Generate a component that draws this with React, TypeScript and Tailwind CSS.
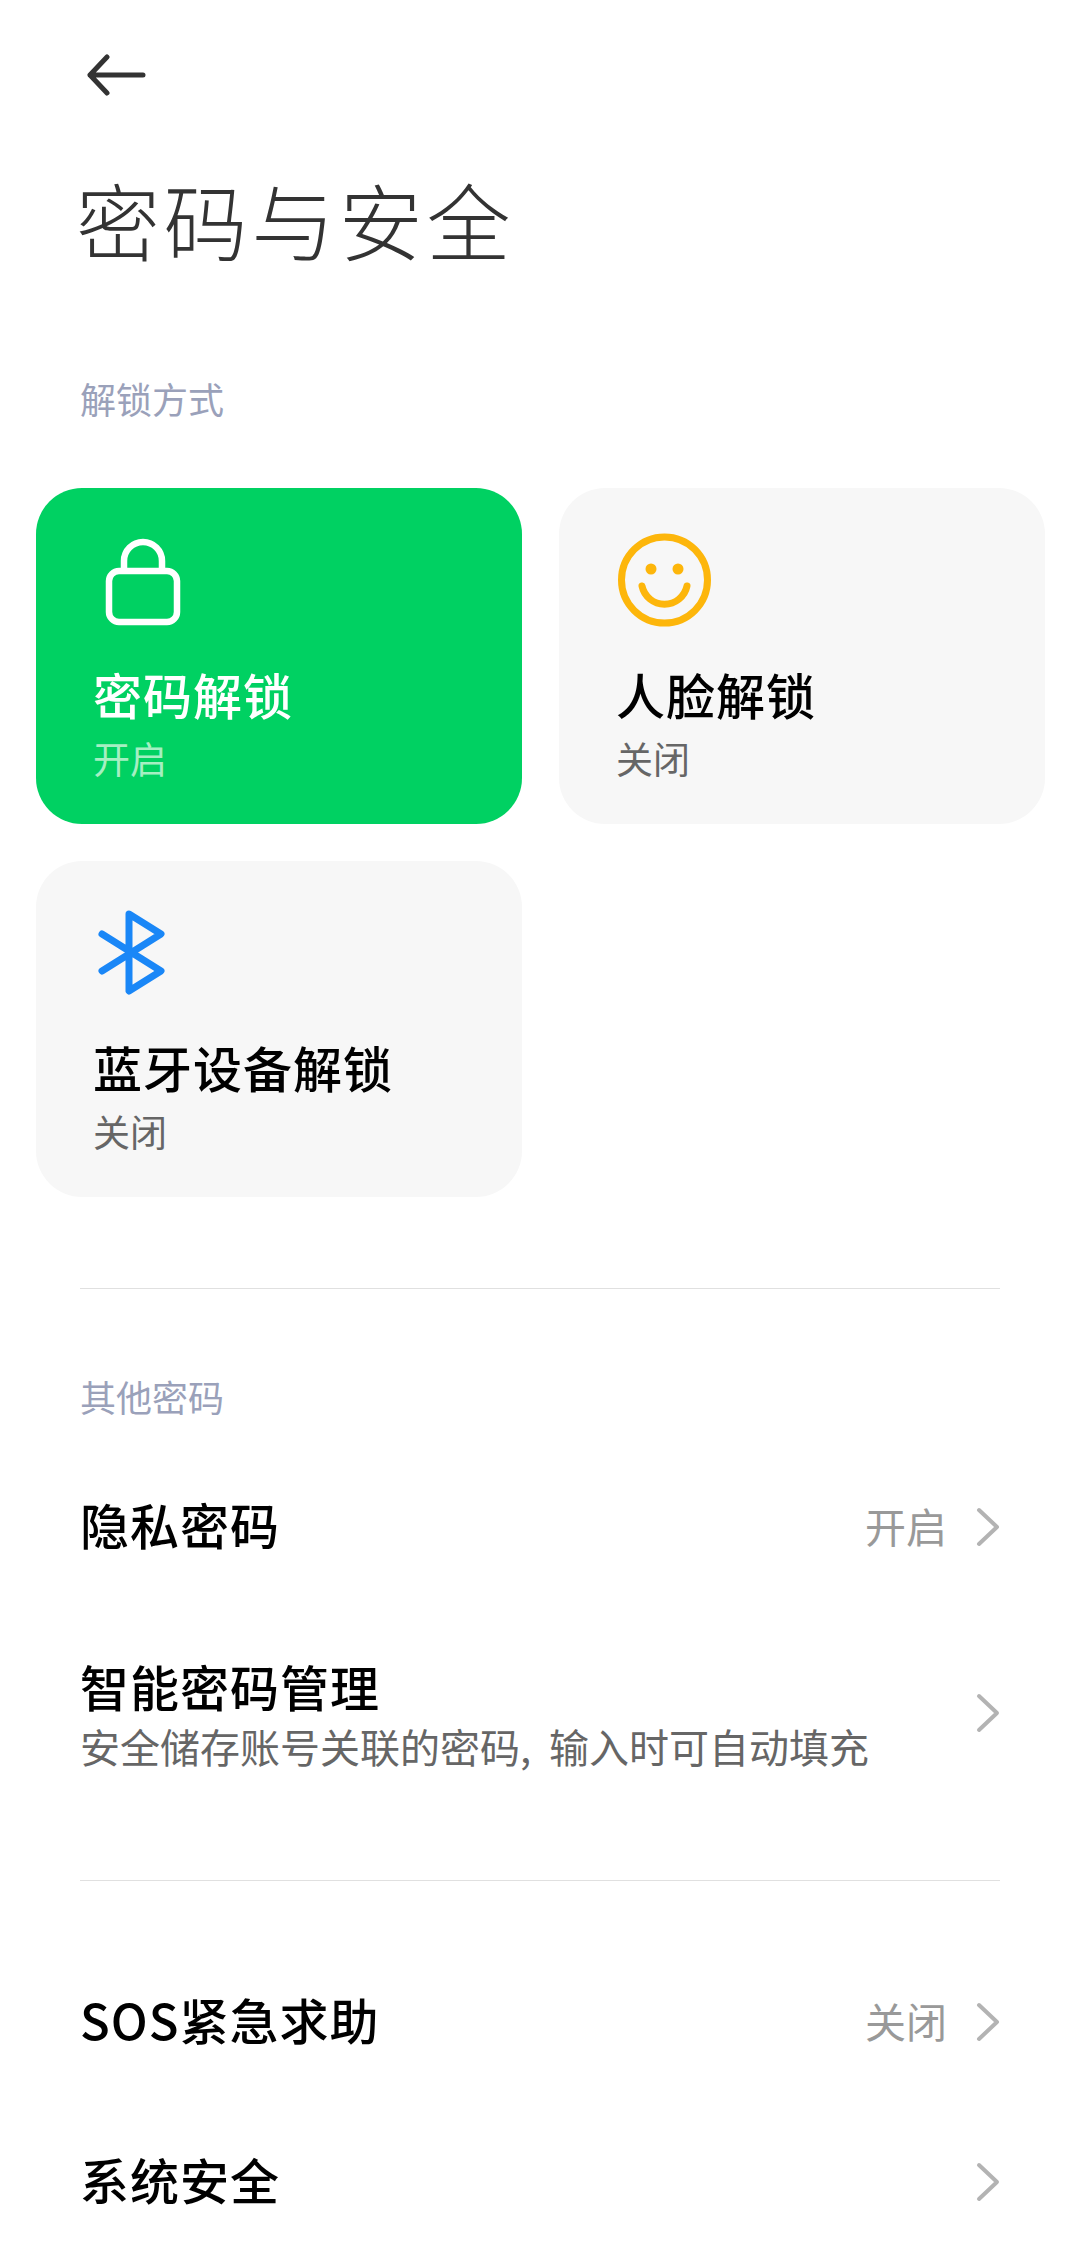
const Lock = () => (
  <svg width="96" height="98" viewBox="0 0 96 98" fill="none" stroke="#fff" strokeWidth="6.5" className="ml-[1px]">
    <rect x="15" y="38" width="68" height="51" rx="10" />
    <path d="M30 38V28a19 19 0 0 1 38 0V38" />
  </svg>
);

const Smile = () => (
  <svg width="96" height="98" viewBox="0 0 96 98" fill="none" stroke="#fdb60b" strokeWidth="7" strokeLinecap="round">
    <circle cx="48.5" cy="47" r="43" />
    <circle cx="35" cy="36" r="5.5" fill="#fdb60b" stroke="none" />
    <circle cx="62" cy="36" r="5.5" fill="#fdb60b" stroke="none" />
    <path d="M26 53A23 23 0 0 0 71 53" />
  </svg>
);

const Bluetooth = () => (
  <svg width="96" height="98" viewBox="0 0 96 98" fill="none" stroke="#1a87f7" strokeWidth="7" strokeLinecap="round" strokeLinejoin="round" className="ml-[1px]">
    <path d="M8 28L67 65L35 85V8L67 28L8 65" />
  </svg>
);

const Chevron = () => (
  <svg width="24" height="40" viewBox="0 0 24 40" fill="none" stroke="#b3b3b3" strokeWidth="4" strokeLinecap="round" strokeLinejoin="round" className="shrink-0">
    <path d="M3 3L21 20L3 37" />
  </svg>
);

const Card = ({ icon, title, sub, active }: { icon: React.ReactNode; title: string; sub: string; active?: boolean }) => (
  <div className={`flex h-[336px] flex-col rounded-[46px] pl-[57px] pt-[45px] ${active ? "bg-[#00d162]" : "bg-[#f7f7f7]"}`}>
    <div className="h-[98px]">{icon}</div>
    <div className={`mt-[33px] text-[49px] leading-[60px] font-medium tracking-[1px] ${active ? "text-white" : "text-black"}`}>{title}</div>
    <div className={`mt-[9px] text-[37px] leading-[50px] ${active ? "text-[#a5efc2]" : "text-[#666666]"}`}>{sub}</div>
  </div>
);

const Row = ({ title, value }: { title: string; value?: string }) => (
  <div className="flex h-[160px] items-center pl-[80px] pr-[80px]">
    <div className="flex-1 pb-[6px] text-[49px] font-medium tracking-[1px] text-black">{title}</div>
    {value && <div className="mr-[29px] pb-[3px] text-[41px] text-[#999999]">{value}</div>}
    <Chevron />
  </div>
);

export default function App() {
  return (
    <div className="h-[2247px] w-[1080px] overflow-hidden bg-white font-['Noto_Sans_CJK_SC',sans-serif]">
      <div className="pl-[86px] pt-[54px]">
        <svg width="60" height="42" viewBox="0 0 60 42" fill="none" stroke="#333333" strokeWidth="5" strokeLinecap="round" strokeLinejoin="round">
          <path d="M57 21H4M21 3L4 21L21 39" />
        </svg>
      </div>
      <h1 className="mt-[71px] pl-[76px] text-[84px] leading-[104px] font-light tracking-[3.6px] text-[#333333]">密码与安全</h1>
      <div className="mt-[102px] pl-[80px] text-[36px] leading-[50px] text-[#9aa1ba]">解锁方式</div>

      <div className="mt-[65px] grid grid-cols-[486px_486px] gap-x-[37px] gap-y-[37px] pl-[36px]">
        <Card icon={<Lock />} title="密码解锁" sub="开启" active />
        <Card icon={<Smile />} title="人脸解锁" sub="关闭" />
        <Card icon={<Bluetooth />} title="蓝牙设备解锁" sub="关闭" />
      </div>

      <div className="mx-[80px] mt-[91px] h-px bg-[#e0e0e0]" />
      <div className="mt-[82px] pl-[80px] text-[36px] leading-[50px] text-[#9aa1ba]">其他密码</div>
      <div className="mt-[26px]">
        <Row title="隐私密码" value="开启" />
        <div className="flex h-[212px] items-center pl-[80px] pr-[80px]">
          <div className="flex-1">
            <div className="text-[49px] leading-[60px] font-medium tracking-[1px] text-black">智能密码管理</div>
            <div className="mt-[5px] text-[40px] leading-[50px] [word-spacing:9px] text-[#666666]">安全储存账号关联的密码, 输入时可自动填充</div>
          </div>
          <Chevron />
        </div>
      </div>
      <div className="mx-[80px] mt-[61px] h-px bg-[#e0e0e0]" />
      <div className="mt-[61px]">
        <Row title="SOS紧急求助" value="关闭" />
        <Row title="系统安全" />
      </div>
    </div>
  );
}
